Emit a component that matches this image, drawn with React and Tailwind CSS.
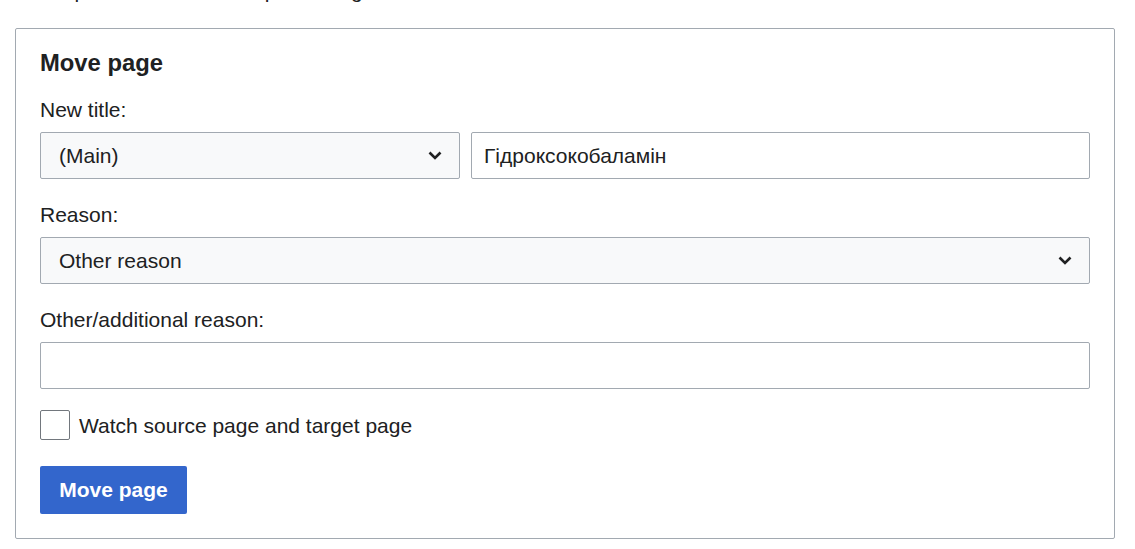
import React from "react";

function Chevron() {
  return (
    <svg width="14" height="9" viewBox="0 0 14 9" fill="none" className="shrink-0">
      <path d="M1.5 1.5 L7 7 L12.5 1.5" stroke="#202122" strokeWidth="2.6" strokeLinecap="butt" strokeLinejoin="miter" />
    </svg>
  );
}

export default function App() {
  return (
    <div
      className="bg-white text-[#202122] text-[21px] min-h-[549px] overflow-hidden"
      style={{ fontFamily: '"Liberation Sans", Arial, sans-serif' }}
    >
      <div className="-mt-[26px] ml-[16px] leading-[33px] whitespace-nowrap">
        In the protected title of the point the global list.
      </div>
      <div className="mt-[21px] ml-[15px] mr-[20px] border border-[#a2a9b1] rounded-[2px] px-[24px] pt-[19px] pb-[24px]">
        <h2 className="text-[23.8px] font-bold leading-[30px]">Move page</h2>

        <div className="mt-[17px] leading-[30px]">New title:</div>
        <div className="mt-[7px] flex gap-[11px]">
          <div className="w-[420px] h-[47px] flex items-center justify-between bg-[#f8f9fa] border border-[#a2a9b1] rounded-[2px] pl-[18px] pr-[17px]">
            <span>(Main)</span>
            <Chevron />
          </div>
          <div className="flex-1 h-[47px] flex items-center bg-white border border-[#a2a9b1] rounded-[2px] pl-[12px]">
            <span>Гідроксокобаламін</span>
          </div>
        </div>

        <div className="mt-[21px] leading-[30px]">Reason:</div>
        <div className="mt-[7px] h-[47px] flex items-center justify-between bg-[#f8f9fa] border border-[#a2a9b1] rounded-[2px] pl-[18px] pr-[17px]">
          <span>Other reason</span>
          <Chevron />
        </div>

        <div className="mt-[21px] leading-[30px]">Other/additional reason:</div>
        <div className="mt-[7px] h-[47px] bg-white border border-[#a2a9b1] rounded-[2px]"></div>

        <div className="mt-[21px] h-[30px] flex items-center gap-[9px]">
          <div className="w-[30px] h-[30px] border border-[#72777d] rounded-[2px] bg-white shrink-0"></div>
          <span className="leading-[30px] translate-y-[1px]">Watch source page and target page</span>
        </div>

        <div className="mt-[26px]">
          <button className="w-[147px] h-[48px] bg-[#3366cc] rounded-[2px] text-white font-bold leading-[30px] flex items-center justify-center">
            Move page
          </button>
        </div>
      </div>
    </div>
  );
}
